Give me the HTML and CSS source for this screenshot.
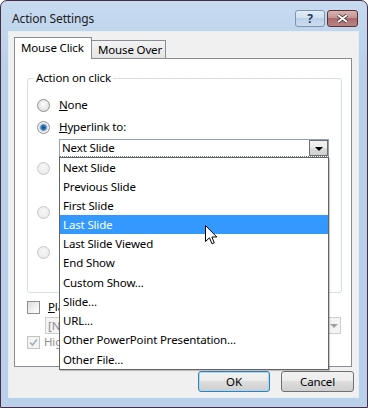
FILE: index.html
```html
<!DOCTYPE html>
<html>
<head>
    <title>Action Settings</title>
    <link rel="stylesheet" href="styles.css">
</head>
<body>
<div class="window">
    <div class="titlebar">
        <span class="title">Action Settings</span>
        <div class="caption-buttons">
            <span class="cap-btn help">?</span>
            <span class="cap-btn close">
                <svg width="13" height="9" viewBox="0 0 13 9"><path d="M2 1 L11 8 M11 1 L2 8" stroke="#3a1f1f" stroke-width="3.4"/><path d="M2 1 L11 8 M11 1 L2 8" stroke="#fff" stroke-width="2"/></svg>
            </span>
        </div>
    </div>

    <div class="client">
        <div class="tabs">
            <span class="tab active">Mouse Click</span>
            <span class="tab">Mouse Over</span>
        </div>

        <div class="panel">
            <fieldset class="group">
                <legend>Action on click</legend>

                <div class="option first"><span class="radio"></span><span class="label"><u>N</u>one</span></div>
                <div class="option"><span class="radio checked"></span><span class="label"><u>H</u>yperlink to:</span></div>

                <div class="combo-wrap">
                    <div class="combo">
                        <span class="combo-text">Next Slide</span>
                        <span class="drop-btn"><span class="arrow"></span></span>
                    </div>
                    <ul class="droplist">
                        <li>Next Slide</li>
                        <li>Previous Slide</li>
                        <li>First Slide</li>
                        <li class="sel">Last Slide</li>
                        <li>Last Slide Viewed</li>
                        <li>End Show</li>
                        <li>Custom Show...</li>
                        <li>Slide...</li>
                        <li>URL...</li>
                        <li>Other PowerPoint Presentation...</li>
                        <li>Other File...</li>
                    </ul>
                </div>

                <!-- run program / run macro / object action, labels hidden under the open list -->
                <div class="option gap3 disabled"><span class="radio"></span></div>
                <div class="field f1"></div>
                <div class="option gap4 disabled"><span class="radio"></span></div>
                <div class="field f2"></div>
                <div class="option gap4 disabled"><span class="radio"></span></div>
                <div class="field f3"></div>
            </fieldset>

            <div class="check-row play"><span class="checkbox"></span><span class="label"><u>P</u>lay sound:</span></div>
            <div class="sound-combo">
                <span class="sound-text">[No Sound]</span>
                <span class="sound-btn"><span class="arrow grey"></span></span>
            </div>
            <div class="check-row highlight">
                <span class="checkbox">
                    <svg width="11" height="11" viewBox="0 0 11 11"><path d="M2 5.5 L4.5 8 L9 2.5" fill="none" stroke="#a3aebb" stroke-width="1.6"/></svg>
                </span>
                <span class="label">Highlight <u>c</u>lick</span>
            </div>
        </div>

        <div class="buttons">
            <span class="btn default">OK</span>
            <span class="btn">Cancel</span>
        </div>
    </div>

    <!-- mouse pointer over the list -->
    <svg class="cursor" width="13" height="21" viewBox="0 0 13 21">
        <path d="M0.5 0.5 V16.5 L4.5 12.8 L7 18.8 L9.3 17.8 L6.9 12 H11.8 Z" fill="#fff" stroke="#000" stroke-width="1" stroke-linejoin="miter"/>
    </svg>
</div>
</body>
</html>
```

FILE: styles.css
```css
* {
    box-sizing: border-box;
}
body {
    margin: 0;
    font-family: "Noto Sans", sans-serif;
    font-size: 11.5px;
    letter-spacing: -0.15px;
    color: #000;
    background-color: #fff;
}
.window {
    position: relative;
    width: 368px;
    height: 408px;
    border: 1px solid #4b2c45;
    border-radius: 7px 7px 0 0;
    background: linear-gradient(#c7dbf0, #bad1ea 60px, #b9d1ea);
    display: flex;
    flex-direction: column;
}

/* title bar */
.titlebar {
    height: 30px;
    display: flex;
    justify-content: space-between;
    padding: 9px 9px 0 11px;
}
.title {
    line-height: 18px;
    font-size: 12px;
    color: #1e1e1e;
}
.caption-buttons {
    display: flex;
    gap: 2px;
}
.cap-btn {
    height: 17px;
    border-radius: 3px;
    display: flex;
    align-items: center;
    justify-content: center;
}
.help {
    width: 30px;
    border: 1px solid #7d95b3;
    background: linear-gradient(#e3edf8, #cfdff0 50%, #bcd0e8 50%, #cddcee);
    color: #23395a;
    font-weight: bold;
    font-size: 12px;
}
.close {
    width: 31px;
    border: 1px solid #5e3131;
    background: linear-gradient(#d7b4b4, #c29191 50%, #a96b6b 50%, #b98484);
}

/* client area */
.client {
    flex: 1;
    margin: 0 8px 9px 7px;
    background-color: #f0f0f0;
    border: 1px solid #e4ecf4;
    padding: 5px 5px 0 5px;
}
.tabs {
    display: flex;
    align-items: flex-end;
    height: 21px;
}
.tab {
    height: 18px;
    width: 75px;
    margin-left: -1px;
    padding: 1px 0 0 6px;
    line-height: 16px;
    white-space: nowrap;
    border: 1px solid #898c95;
    border-bottom: none;
    background: linear-gradient(#f3f3f3, #e4e4e4);
}
.tab.active {
    position: relative;
    z-index: 1;
    height: 22px;
    width: 78px;
    margin-left: 0;
    margin-bottom: -1px;
    padding: 2px 0 0 6px;
    background: #fff;
}
.panel {
    width: 338px;
    height: 309px;
    border: 1px solid #898c95;
    background-color: #fff;
}

/* Action on click group */
.group {
    margin: 11px 9px 0 12px;
    padding: 0 0 10px 9px;
    border: 1px solid #d5dfe5;
    border-radius: 3px;
}
.group legend {
    margin-left: -3px;
    padding: 0 2px;
    line-height: 16px;
}
.option {
    display: flex;
    align-items: center;
    height: 16px;
    margin-top: 6px;
}
.option.first {
    margin-top: 11px;
}
.option.gap3 {
    margin-top: 3px;
}
.option.gap4 {
    margin-top: 4px;
}
.option .label {
    margin-left: 9px;
    line-height: 16px;
}
.radio {
    width: 13px;
    height: 13px;
    flex: none;
    border-radius: 50%;
    border: 1px solid #8e8f8f;
    background: radial-gradient(circle at 50% 40%, #fdfdfd, #e2e2e2 70%, #cfcfcf);
}
.radio.checked {
    background: radial-gradient(circle, #0f4a86 0, #2a6eb4 2px, #79acd9 3.2px, #dadada 3.8px, #f3f3f3 5px, #d8d8d8);
}
.option.disabled .radio {
    border-color: #c6c6c6;
    background: radial-gradient(circle at 50% 40%, #f7f7f7, #ececec 70%, #e2e2e2);
}
.field {
    margin: 2px 0 0 22px;
    width: 200px;
    border: 1px solid #d9d9d9;
    background-color: #f4f4f4;
}
.f1 {
    height: 22px;
}
.f2 {
    height: 18px;
}
.f3 {
    height: 20px;
}

/* Hyperlink combo and its open list */
.combo-wrap {
    position: relative;
    margin: 4px 0 0 22px;
    width: 270px;
    height: 18px;
}
.combo {
    height: 18px;
    display: flex;
    justify-content: space-between;
    border: 1px solid #8ea4bc;
    border-bottom: 1px dotted #6d7f93;
    background-color: #fff;
}
.combo-text {
    padding-left: 2px;
    line-height: 16px;
}
.drop-btn {
    width: 19px;
    height: 16px;
    border: 1px solid #707070;
    background: linear-gradient(#f2f2f2, #ebebeb 50%, #dddddd 50%, #cfcfcf);
    display: flex;
    align-items: center;
    justify-content: center;
}
.arrow {
    width: 0;
    height: 0;
    border-left: 4px solid transparent;
    border-right: 4px solid transparent;
    border-top: 4px solid #000;
    margin-top: 1px;
}
.arrow.grey {
    border-top-color: #a0a0a0;
}
.droplist {
    position: absolute;
    top: 18px;
    left: 0;
    width: 270px;
    margin: 0;
    padding: 0;
    list-style: none;
    border: 1px solid #646464;
    background-color: #fff;
    box-shadow: 1px 1px 1px rgba(0, 0, 0, 0.2);
    z-index: 2;
}
.droplist li {
    height: 19px;
    line-height: 19px;
    padding-left: 3px;
    white-space: nowrap;
}
.droplist li:nth-child(n+5) {
    height: 19.3px;
}
.droplist li.sel {
    background-color: #3399ff;
    color: #fff;
}

/* sound and highlight */
.check-row {
    display: flex;
    align-items: center;
    height: 16px;
    margin-left: 12px;
}
.check-row.play {
    margin-top: 6px;
}
.check-row .label {
    line-height: 16px;
    white-space: nowrap;
}
.play .label {
    margin-left: 8px;
}
.highlight .label {
    margin-left: 4px;
    color: #8d8d8d;
}
.checkbox {
    width: 13px;
    height: 13px;
    flex: none;
    border: 1px solid #8e8f8f;
    background: linear-gradient(135deg, #dcdcdc, #f6f6f6 70%, #fff);
    display: flex;
    align-items: center;
    justify-content: center;
}
.highlight .checkbox {
    border-color: #c3c3c3;
    background: #f4f4f4;
}
.sound-combo {
    margin: 2px 0 0 30px;
    width: 296px;
    height: 17px;
    display: flex;
    justify-content: space-between;
    border: 1px solid #c9ced4;
    background-color: #f4f4f4;
}
.sound-text {
    padding-left: 2px;
    line-height: 15px;
    color: #8d8d8d;
}
.sound-btn {
    width: 13px;
    display: flex;
    align-items: center;
    justify-content: center;
    border-left: 1px dotted #b6c2ce;
}

/* dialog buttons */
.buttons {
    display: flex;
    justify-content: flex-end;
    gap: 11px;
    margin-top: 4px;
    margin-right: -1px;
}
.btn {
    width: 73px;
    height: 21px;
    line-height: 19px;
    text-align: center;
    border: 1px solid #707070;
    border-radius: 3px;
    background: linear-gradient(#f2f2f2, #ebebeb 50%, #dddddd 50%, #cfcfcf);
}
.btn.default {
    width: 72px;
    border-color: #3c7fb1;
    box-shadow: inset 0 0 0 1px #a8d8f8;
}

.cursor {
    position: absolute;
    left: 204px;
    top: 224px;
    z-index: 3;
}
```
